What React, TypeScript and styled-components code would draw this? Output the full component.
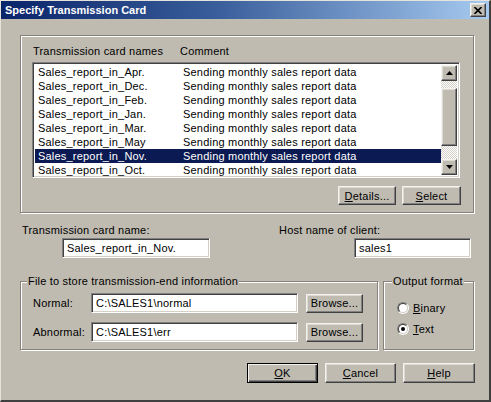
import React from 'react'
import styled, {createGlobalStyle, css} from 'styled-components'

const FACE = '#bfbbb1'

const GlobalStyle = createGlobalStyle`
    html, body {
        margin: 0;
        padding: 0;
        background: ${FACE};
    }
    body {
        font-family: "Liberation Sans", Arial, sans-serif;
        font-size: 11px;
        letter-spacing: 0.2px;
        color: #000;
    }
`

const raised = css`
    border: 1px solid;
    border-color: #f4f2ee #404040 #404040 #f4f2ee;
    box-shadow: inset -1px -1px 0 #808080, inset 1px 1px 0 #dedbd3;
`
const sunken = css`
    border: 1px solid;
    border-color: #808080 #fff #fff #808080;
    box-shadow: inset 1px 1px 0 #404040, inset -1px -1px 0 #d4d0c8;
`
const etched = css`
    border: 1px solid #85827b;
    box-shadow: inset 1px 1px 0 #fff, 1px 1px 0 #fff;
`

const Window = styled.div`
    width: 491px;
    height: 402px;
    box-sizing: border-box;
    background: ${FACE};
    border-top: 1px solid #e6e3dc;
    border-left: 1px solid #e6e3dc;
    border-right: 2px solid #404040;
    border-bottom: 2px solid #404040;
    display: flex;
    flex-direction: column;
    overflow: hidden;
`
const TitleBar = styled.div`
    height: 18px;
    flex: none;
    display: flex;
    align-items: center;
    justify-content: space-between;
    padding: 0 3px 0 4px;
    background: linear-gradient(to right, #0a246a 0%, #3a5f9c 45%, #a6caf0 100%);
`
const TitleText = styled.span`
    color: #fff;
    font-weight: bold;
    letter-spacing: 0;
`
const CloseButton = styled.div`
    ${raised};
    width: 16px;
    height: 14px;
    box-sizing: border-box;
    background: ${FACE};
    display: flex;
    align-items: center;
    justify-content: center;
`
const Body = styled.div`
    flex: 1;
    padding: 16px 0 0 19px;
    display: flex;
    flex-direction: column;
`
const ListGroup = styled.div`
    ${etched};
    width: 454px;
    height: 178px;
    box-sizing: border-box;
    padding: 8px 0 0 11px;
`
const ListHeader = styled.div`
    display: grid;
    grid-template-columns: 147px 1fr;
    padding-left: 1px;
    height: 14px;
    line-height: 14px;
    margin-bottom: 4px;
`
const ListBox = styled.div`
    ${sunken};
    width: 428px;
    height: 116px;
    box-sizing: border-box;
    padding: 2px;
    background: #fff;
    display: flex;
`
const Rows = styled.div`
    flex: 1;
`
const Row = styled.div<{$selected?: boolean}>`
    display: grid;
    grid-template-columns: 145px 1fr;
    height: 14px;
    line-height: 14px;
    padding-left: 3px;
    white-space: nowrap;
    background: ${p => (p.$selected ? '#0b1a52' : 'transparent')};
    color: ${p => (p.$selected ? '#fff' : '#000')};
`
const ScrollBar = styled.div`
    width: 16px;
    display: flex;
    flex-direction: column;
`
const ScrollArrow = styled.div`
    ${raised};
    width: 16px;
    height: 16px;
    box-sizing: border-box;
    background: ${FACE};
    display: flex;
    align-items: center;
    justify-content: center;
`
const ScrollTrack = styled.div`
    flex: 1;
    padding-top: 7px;
    background: repeating-conic-gradient(#fff 0 25%, #d4d0c8 0 50%) 0 0 / 2px 2px;
`
const ScrollThumb = styled.div`
    ${raised};
    height: 58px;
    box-sizing: border-box;
    background: ${FACE};
`
const ButtonRow = styled.div<{$gap: number; $top: number; $right: number}>`
    display: flex;
    justify-content: flex-end;
    gap: ${p => p.$gap}px;
    margin-top: ${p => p.$top}px;
    padding-right: ${p => p.$right}px;
`
const Button = styled.button<{$w: number; $h: number; $default?: boolean}>`
    ${raised};
    width: ${p => p.$w}px;
    height: ${p => p.$h}px;
    box-sizing: border-box;
    padding: 0;
    background: ${FACE};
    font: inherit;
    letter-spacing: 0.2px;
    color: #000;
    ${p => p.$default && css`
        border: 1px solid #000;
        box-shadow: inset 1px 1px 0 #f4f2ee, inset -1px -1px 0 #404040, inset -2px -2px 0 #808080;
    `}
`
const FieldRow = styled.div`
    display: flex;
    justify-content: space-between;
    width: 451px;
    margin-top: 10px;
`
const Field = styled.div<{$indent: number; $pad: number}>`
    display: flex;
    flex-direction: column;
    padding-left: ${p => p.$pad}px;
    & > input {
        margin-left: ${p => p.$indent}px;
    }
`
const Label = styled.span`
    height: 14px;
    line-height: 14px;
    margin-bottom: 1px;
    white-space: nowrap;
`
const TextInput = styled.input<{$w: number}>`
    ${sunken};
    width: ${p => p.$w}px;
    height: 20px;
    box-sizing: border-box;
    padding: 0 0 0 4px;
    background: #fff;
    font: inherit;
    letter-spacing: 0.2px;
    color: #000;
    outline: none;
`
const GroupRow = styled.div`
    display: flex;
    gap: 5px;
    margin-top: 16px;
    align-items: stretch;
`
const GroupBox = styled.fieldset<{$w: number}>`
    ${etched};
    width: ${p => p.$w}px;
    min-width: 0;
    box-sizing: border-box;
    margin: 0;
    padding: 0;
`
const Legend = styled.legend<{$left: number}>`
    margin-left: ${p => p.$left}px;
    padding: 0 1px;
    height: 14px;
    line-height: 14px;
    background: ${FACE};
`
const FileRows = styled.div`
    display: flex;
    flex-direction: column;
    gap: 9px;
    padding: 5px 14px 7px 12px;
`
const FileRow = styled.div`
    display: flex;
    align-items: center;
`
const FileLabel = styled.span`
    width: 58px;
`
const RadioList = styled.div`
    display: flex;
    flex-direction: column;
    gap: 5px;
    padding: 12px 0 12px 13px;
`
const RadioRow = styled.label`
    display: flex;
    align-items: center;
    gap: 4px;
    height: 16px;
`
const RadioOuter = styled.span`
    width: 12px;
    height: 12px;
    box-sizing: border-box;
    border-radius: 50%;
    border: 1px solid;
    border-color: #808080 #fff #fff #808080;
    transform: rotate(0deg);
`
const RadioInner = styled.span<{$checked?: boolean}>`
    display: flex;
    align-items: center;
    justify-content: center;
    width: 10px;
    height: 10px;
    box-sizing: border-box;
    border-radius: 50%;
    border: 1px solid;
    border-color: #404040 #d4d0c8 #d4d0c8 #404040;
    background: #fff;
    &::after {
        content: '';
        display: ${p => (p.$checked ? 'block' : 'none')};
        width: 4px;
        height: 4px;
        border-radius: 50%;
        background: #000;
    }
`
const Key = styled.u`
    text-decoration: underline;
`

const cards = ['Apr.', 'Dec.', 'Feb.', 'Jan.', 'Mar.', 'May', 'Nov.', 'Oct.']

const Arrow = ({up}: {up?: boolean}) => (
    <svg width="7" height="4" viewBox="0 0 7 4">
        <path d={up ? 'M3.5 0 L7 4 L0 4 Z' : 'M0 0 L7 0 L3.5 4 Z'} fill="#000" />
    </svg>
)

const Radio = ({label, k, checked}: {label: string; k: string; checked?: boolean}) => (
    <RadioRow>
        <RadioOuter>
            <RadioInner $checked={checked} />
        </RadioOuter>
        <span><Key>{k}</Key>{label}</span>
    </RadioRow>
)

export default function App(): JSX.Element {
    return (
        <>
            <GlobalStyle />
            <Window>
                <TitleBar>
                    <TitleText>Specify Transmission Card</TitleText>
                    <CloseButton>
                        <svg width="8" height="7" viewBox="0 0 8 7">
                            <path d="M0.5 0 L7.5 7 M7.5 0 L0.5 7" stroke="#000" strokeWidth="1.6" />
                        </svg>
                    </CloseButton>
                </TitleBar>
                <Body>
                    <ListGroup>
                        <ListHeader>
                            <span>Transmission card names</span>
                            <span>Comment</span>
                        </ListHeader>
                        <ListBox>
                            <Rows>
                                {cards.map(c => (
                                    <Row key={c} $selected={c === 'Nov.'}>
                                        <span>Sales_report_in_{c}</span>
                                        <span>Sending monthly sales report data</span>
                                    </Row>
                                ))}
                            </Rows>
                            <ScrollBar>
                                <ScrollArrow><Arrow up /></ScrollArrow>
                                <ScrollTrack><ScrollThumb /></ScrollTrack>
                                <ScrollArrow><Arrow /></ScrollArrow>
                            </ScrollBar>
                        </ListBox>
                        <ButtonRow $gap={6} $top={8} $right={12}>
                            <Button $w={58} $h={19}><Key>D</Key>etails...</Button>
                            <Button $w={59} $h={19}><Key>S</Key>elect</Button>
                        </ButtonRow>
                    </ListGroup>
                    <FieldRow>
                        <Field $pad={2} $indent={40}>
                            <Label>Transmission card name:</Label>
                            <TextInput $w={148} defaultValue="Sales_report_in_Nov." />
                        </Field>
                        <Field $pad={0} $indent={75}>
                            <Label>Host name of client:</Label>
                            <TextInput $w={117} defaultValue="sales1" />
                        </Field>
                    </FieldRow>
                    <GroupRow>
                        <GroupBox $w={358}>
                            <Legend $left={6}>File to store transmission-end information</Legend>
                            <FileRows>
                                <FileRow>
                                    <FileLabel>Normal:</FileLabel>
                                    <TextInput $w={207} defaultValue="C:\SALES1\normal" />
                                    <Button $w={57} $h={19} style={{marginLeft: 8}}>Browse...</Button>
                                </FileRow>
                                <FileRow>
                                    <FileLabel>Abnormal:</FileLabel>
                                    <TextInput $w={207} defaultValue="C:\SALES1\err" />
                                    <Button $w={57} $h={19} style={{marginLeft: 8}}>Browse...</Button>
                                </FileRow>
                            </FileRows>
                        </GroupBox>
                        <GroupBox $w={91}>
                            <Legend $left={8}>Output format</Legend>
                            <RadioList>
                                <Radio k="B" label="inary" />
                                <Radio k="T" label="ext" checked />
                            </RadioList>
                        </GroupBox>
                    </GroupRow>
                    <ButtonRow $gap={7} $top={13} $right={0} style={{width: 455}}>
                        <Button $w={71} $h={20} $default><Key>O</Key>K</Button>
                        <Button $w={71} $h={20}><Key>C</Key>ancel</Button>
                        <Button $w={72} $h={20}><Key>H</Key>elp</Button>
                    </ButtonRow>
                </Body>
            </Window>
        </>
    )
}
